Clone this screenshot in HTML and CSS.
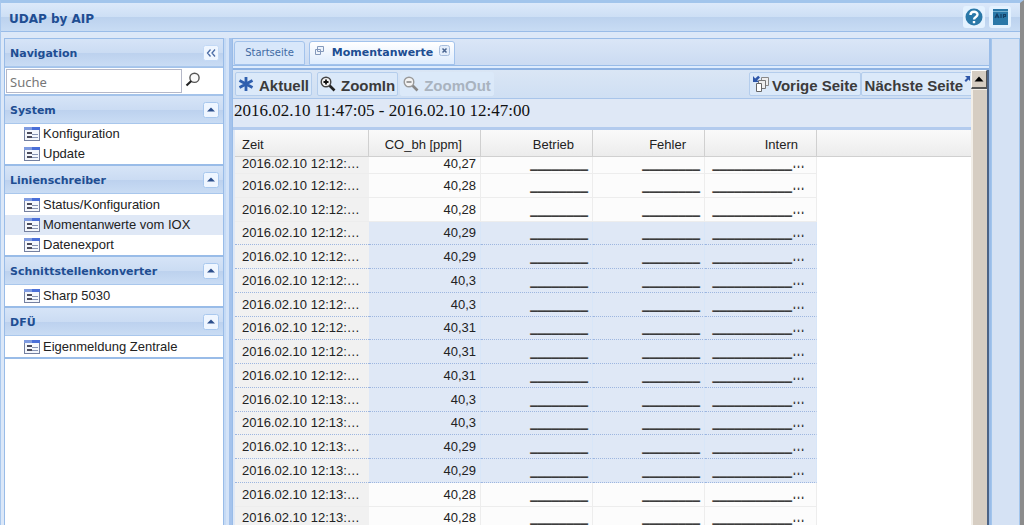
FILE: index.html
```html
<!DOCTYPE html>
<html lang="de">
<head>
<meta charset="utf-8">
<title>UDAP by AIP</title>
<link rel="stylesheet" href="styles.css">
</head>
<body>
<svg class="defs" aria-hidden="true">
  <symbol id="form" viewBox="0 0 16 14">
    <rect x="0.5" y="0.5" width="15" height="13" fill="#f4f7fc" stroke="#7480a0"/>
    <path d="M0 0h16v3H0z" fill="#7f9be0"/><path d="M8 0h8v3H8z" fill="#4a6fd8"/>
    <path d="M3 6h5M3 10h5" stroke="#4c4c5c" stroke-width="2"/>
    <path d="M8 7.500h6M8 10.500h6" stroke="#8794b4"/>
  </symbol>
  <symbol id="up" viewBox="0 0 16 16">
    <rect x="0.500" y="0.500" width="15" height="15" rx="2" fill="#eff6ff" stroke="#a9c8ee"/>
    <path d="M4 9.500L8 5.500l4 4z" fill="#2d4f8c"/>
  </symbol>
  <symbol id="pages" viewBox="0 0 18 18">
    <path d="M9.500 2.500h7v8h-7z" fill="#eee" stroke="#888"/>
    <path d="M6.500 5.500h7v8h-7z" fill="#eee" stroke="#777"/>
    <path d="M4.500 8.500h5v8h-5z" fill="#fff" stroke="#666"/>
  </symbol>
</svg>
<div class="app">
  <header class="titlebar">
    <h1>UDAP by AIP</h1>
    <button class="tool" aria-label="Hilfe"><svg width="22" height="22" viewBox="0 0 22 22"><circle cx="11" cy="11" r="8.500" fill="#2a78a8"/><path d="M7.500 9C7.500 4.800 14.500 4.800 14.500 8.500C14.500 11 11 10.800 11 13.500M11 15v2.300" fill="none" stroke="#fff" stroke-width="2.400"/></svg></button>
    <button class="tool" aria-label="AIP"><svg width="22" height="22" viewBox="0 0 22 22"><path d="M4 3h15v16H4z" fill="#2a78a8"/><path d="M4 5.500h15" stroke="#74b0d0"/><path d="M6 12l2-4 2 4M7 11h2M12 8v4M14.500 12V8.500h2v2h-2" stroke="#123f66" stroke-width="1.200" fill="none"/></svg></button>
  </header>
  <div class="columns">
    <nav class="nav">
      <div class="bar nav-title"><h2>Navigation</h2><button class="mini" aria-label="Einklappen"><svg width="16" height="16" viewBox="0 0 16 16"><rect x="0.500" y="0.500" width="15" height="15" rx="2" fill="#eff6ff" stroke="#c3d9f5"/><path d="M7.500 4.500L4.500 8l3 3.500M12 4.500L9 8l3 3.500" fill="none" stroke="#4a6ba5" stroke-width="1.300"/></svg></button></div>
      <form class="search"><input type="text" placeholder="Suche" aria-label="Suche"><button type="button" aria-label="Suchen"><svg width="16" height="16" viewBox="0 0 16 16"><circle cx="9.500" cy="5.800" r="4.600" fill="#fafafa" stroke="#555" stroke-width="1.400"/><path d="M6.300 9L1.500 13.500" stroke="#222" stroke-width="2.200"/></svg></button></form>
      <section><div class="bar"><h2>System</h2><button class="mini" aria-label="System einklappen"><svg width="16" height="16"><use href="#up"/></svg></button></div>
        <ul><li><a href="#"><svg width="16" height="14"><use href="#form"/></svg>Konfiguration</a></li><li><a href="#"><svg width="16" height="14"><use href="#form"/></svg>Update</a></li></ul></section>
      <section><div class="bar"><h2>Linienschreiber</h2><button class="mini" aria-label="Linienschreiber einklappen"><svg width="16" height="16"><use href="#up"/></svg></button></div>
        <ul><li><a href="#"><svg width="16" height="14"><use href="#form"/></svg>Status/Konfiguration</a></li><li><a class="current" href="#"><svg width="16" height="14"><use href="#form"/></svg>Momentanwerte vom IOX</a></li><li><a href="#"><svg width="16" height="14"><use href="#form"/></svg>Datenexport</a></li></ul></section>
      <section><div class="bar"><h2>Schnittstellenkonverter</h2><button class="mini" aria-label="Schnittstellenkonverter einklappen"><svg width="16" height="16"><use href="#up"/></svg></button></div>
        <ul><li><a href="#"><svg width="16" height="14"><use href="#form"/></svg>Sharp 5030</a></li></ul></section>
      <section><div class="bar"><h2>DFÜ</h2><button class="mini" aria-label="DFÜ einklappen"><svg width="16" height="16"><use href="#up"/></svg></button></div>
        <ul><li><a href="#"><svg width="16" height="14"><use href="#form"/></svg>Eigenmeldung Zentrale</a></li></ul></section>
    </nav>
    <div class="splitter"></div>
    <main class="main">
      <div class="tabs">
        <button class="tab">Startseite</button>
        <button class="tab active"><svg class="tab-icon" width="12" height="12" viewBox="0 0 12 12"><path d="M3.500 1.500h6v5h-6zM1.500 4.500h5v5h-5z" fill="#eef4fc" stroke="#8499bb"/></svg><span>Momentanwerte</span><svg class="tab-close" width="11" height="11" viewBox="0 0 11 11"><rect x="0.500" y="0.500" width="10" height="10" rx="2" fill="#e4eefb" stroke="#a6bddd"/><path d="M3.500 3.500l4 4M7.500 3.500l-4 4" stroke="#4a6590" stroke-width="1.500"/></svg></button>
      </div>
      <div class="tab-strip"></div>
      <div class="view">
        <div class="content">
          <div class="toolbar">
            <button class="btn"><svg width="16" height="16" viewBox="0 0 16 16"><path d="M8 1v14M1.500 4.500l13 7M1.500 11.500l13-7" stroke="#2f5fae" stroke-width="2.800"/></svg>Aktuell</button>
            <button class="btn"><svg width="16" height="16" viewBox="0 0 16 16"><path d="M9 9l5.500 5.500" stroke="#222" stroke-width="2.600"/><circle cx="6" cy="6" r="4.800" fill="#f3f3f3" stroke="#444" stroke-width="1.400"/><path d="M6 3.500v5M3.500 6h5" stroke="#111" stroke-width="1.800"/></svg>ZoomIn</button>
            <button class="btn off" disabled><svg width="16" height="16" viewBox="0 0 16 16"><path d="M9 9l5.500 5.500" stroke="#888" stroke-width="2.600"/><circle cx="6" cy="6" r="4.800" fill="#f3f3f3" stroke="#999" stroke-width="1.400"/><path d="M3.500 6h5" stroke="#888" stroke-width="1.600"/></svg>ZoomOut</button>
            <span class="fill"></span>
            <button class="btn page"><svg width="18" height="18" viewBox="0 0 18 18"><use href="#pages"/><path d="M1 1v6h6L5.200 5.200 8 2.500 6.200 0.800 3.200 3.500z" fill="#2e56a8"/></svg>Vorige Seite</button>
            <button class="btn page next">Nächste Seite<svg width="18" height="18" viewBox="0 0 18 18"><path d="M1 1h5v5L4.500 4.500 2 7 0.500 5.500 3 3z" fill="#2e56a8"/><path d="M7.500 6.500h8v8h-8z" fill="#eee" stroke="#777"/></svg></button>
          </div>
          <p class="range">2016.02.10 11:47:05 - 2016.02.10 12:47:00</p>
          <div class="grid">
            <table>
              <colgroup><col class="c-time"><col class="c-value"><col class="c-value"><col class="c-value"><col class="c-value"><col></colgroup>
              <thead><tr><th>Zeit</th><th>CO_bh [ppm]</th><th>Betrieb</th><th>Fehler</th><th>Intern</th><th class="rest"></th></tr></thead>
              <tbody>
<tr class="cut"><td>2016.02.10 12:12:…</td><td>40,27</td><td>________</td><td>________</td><td>___________…</td><td></td></tr>
<tr><td>2016.02.10 12:12:…</td><td>40,28</td><td>________</td><td>________</td><td>___________…</td><td></td></tr>
<tr><td>2016.02.10 12:12:…</td><td>40,28</td><td>________</td><td>________</td><td>___________…</td><td></td></tr>
<tr class="sel"><td>2016.02.10 12:12:…</td><td>40,29</td><td>________</td><td>________</td><td>___________…</td><td></td></tr>
<tr class="sel"><td>2016.02.10 12:12:…</td><td>40,29</td><td>________</td><td>________</td><td>___________…</td><td></td></tr>
<tr class="sel"><td>2016.02.10 12:12:…</td><td>40,3</td><td>________</td><td>________</td><td>___________…</td><td></td></tr>
<tr class="sel"><td>2016.02.10 12:12:…</td><td>40,3</td><td>________</td><td>________</td><td>___________…</td><td></td></tr>
<tr class="sel"><td>2016.02.10 12:12:…</td><td>40,31</td><td>________</td><td>________</td><td>___________…</td><td></td></tr>
<tr class="sel"><td>2016.02.10 12:12:…</td><td>40,31</td><td>________</td><td>________</td><td>___________…</td><td></td></tr>
<tr class="sel"><td>2016.02.10 12:12:…</td><td>40,31</td><td>________</td><td>________</td><td>___________…</td><td></td></tr>
<tr class="sel"><td>2016.02.10 12:13:…</td><td>40,3</td><td>________</td><td>________</td><td>___________…</td><td></td></tr>
<tr class="sel"><td>2016.02.10 12:13:…</td><td>40,3</td><td>________</td><td>________</td><td>___________…</td><td></td></tr>
<tr class="sel"><td>2016.02.10 12:13:…</td><td>40,29</td><td>________</td><td>________</td><td>___________…</td><td></td></tr>
<tr class="sel"><td>2016.02.10 12:13:…</td><td>40,29</td><td>________</td><td>________</td><td>___________…</td><td></td></tr>
<tr><td>2016.02.10 12:13:…</td><td>40,28</td><td>________</td><td>________</td><td>___________…</td><td></td></tr>
<tr><td>2016.02.10 12:13:…</td><td>40,28</td><td>________</td><td>________</td><td>___________…</td><td></td></tr>
              </tbody>
            </table>
          </div>
        </div>
        <div class="scroll"><button aria-label="Nach oben"><svg width="10" height="6" viewBox="0 0 10 6"><path d="M0.500 5.500L5 0.500l4.500 5z" fill="#000"/></svg></button><div class="thumb"></div></div>
      </div>
    </main>
    <aside class="east"></aside>
  </div>
</div>
</body>
</html>
```
FILE: styles.css
```css
* { box-sizing: border-box; }
body { margin: 0; font: 13px/20px "Liberation Sans", Arial, sans-serif; color: #222; }
h1, h2, p, ul { margin: 0; padding: 0; }
button, input { font: inherit; color: inherit; margin: 0; padding: 0; border: 0; background: none; }
button svg { display: block; flex: none; }
.defs { position: absolute; width: 0; height: 0; }

.app { display: flex; flex-direction: column; height: 100vh; overflow: hidden; padding-left: 3px; background: #dce8f8; border-top: 3px solid #a2c5ec; border-left: 1px solid #a9c8ee; border-right: 4px solid #8c8c8c; }
.titlebar { display: flex; align-items: center; gap: 4px; flex: none; height: 29px; margin-left: -3px; padding: 0 9px 0 8px; background: linear-gradient(#dce9fa, #cddff5 50%, #bcd2ee 51%, #c8dcf4); border-bottom: 1px solid #99bce8; }
.titlebar h1 { flex: 1; padding-top: 3px; font: bold 12px/16px "DejaVu Sans", sans-serif; color: #204d92; }
.tool { width: 22px; height: 22px; border-radius: 3px; background: #e4f2ff; }

.columns { display: flex; flex: 1; min-height: 0; margin-top: 6px; }
.nav { flex: none; width: 220px; background: #fff; border: solid #99bce8; border-width: 1px 1px 0; }
.bar { display: flex; align-items: center; justify-content: space-between; height: 28px; padding: 0 4px 0 5px; background: linear-gradient(#d6e4f7, #cbdcf3 50%, #bcd1ee 51%, #c9dcf4); border-bottom: 1px solid #a9c7ec; }
.bar h2 { padding-top: 2px; font: bold 11px/16px "DejaVu Sans", sans-serif; color: #204d92; }
.mini { width: 16px; height: 16px; }
.search { display: flex; height: 29px; border: solid #a4c3ea; border-width: 1px 0 2px; }
.search input { flex: 1; min-width: 0; margin: 1px 0 1px 1px; padding: 1px 3px 0; border: 1px solid #b5b8c8; background: #fff; font: 13px/20px "Noto Sans", sans-serif; }
.search input::placeholder { color: #777; opacity: 1; }
.search button { display: flex; align-items: flex-start; width: 41px; padding: 4px 0 0 3px; }
section { border-bottom: 2px solid #99bce8; }
section + section ul { padding-top: 1px; }
ul { list-style: none; }
li a { display: flex; align-items: center; gap: 3px; height: 20px; padding-left: 19px; color: #222; text-decoration: none; white-space: nowrap; }
li a.current { background: #dfe8f6; }
li svg { flex: none; }

.splitter { flex: none; width: 8px; background: #d3e3f8; border-left: 2px solid #c5daf5; border-right: 3px solid #a5c3ec; }
.main { display: flex; flex-direction: column; flex: 1; min-width: 0; border: solid #99bce8; border-width: 1px 2px 0 1px; }
.tabs { display: flex; align-items: flex-end; gap: 4px; flex: none; height: 27px; padding-left: 1px; background: linear-gradient(#dae6f7, #cbdbf2); border-bottom: 1px solid #99bce8; }
.tab { display: flex; justify-content: center; width: 71px; height: 24px; padding-top: 1px; border: 1px solid #a3c3ec; border-radius: 3px 3px 0 0; background: #d8e7fa; font: 10px/20px "DejaVu Sans", sans-serif; color: #416aa3; }
.tab.active { gap: 6px; width: 146px; background: linear-gradient(#fff, #deecfd); font-weight: bold; font-size: 11px; color: #204d92; }
.tab-icon, .tab-close { margin-top: 2px; }
.tab-strip { flex: none; height: 4px; background: #deecfd; border-bottom: 2px solid #8db2e3; }
.view { display: flex; flex: 1; min-height: 0; }
.content { display: flex; flex-direction: column; flex: 1; min-width: 0; background: #dfe8f6; }
.toolbar { display: flex; flex: none; align-items: center; height: 29px; padding-left: 2px; overflow: hidden; background: linear-gradient(#dae6f5, #cfdff3); border-bottom: 1px solid #a9c5ea; }
.btn { display: flex; flex: none; align-items: center; gap: 5px; height: 24px; margin-right: 5px; padding: 3px 2px 0; border: 1px solid #b4cdec; border-radius: 2px; background: #dbe9f9; font-weight: bold; font-size: 15px; line-height: 20px; color: #3b3b3b; white-space: nowrap; }
.btn svg { margin-top: -3px; }
.btn.off { margin-left: -3px; border-color: #dbe9f9; color: #a9b3bf; }
.btn.page { gap: 2px; margin: 0; }
.btn.page.next { gap: 1px; margin-right: -14px; padding-left: 3px; }
.fill { flex: 1; }
.range { flex: none; height: 31px; padding-left: 1px; font: 17px/24px "Liberation Serif", "Times New Roman", serif; color: #111; border-bottom: 3px solid #b3cbee; white-space: nowrap; }
.grid { flex: 1; min-height: 0; margin-left: 2px; overflow: hidden; background: #fff; }

table { width: 100%; table-layout: fixed; border-collapse: separate; border-spacing: 0; }
.c-time { width: 134px; }
.c-value { width: 112px; }
th { height: 27px; padding: 3px 18px 0 7px; background: linear-gradient(#fafafa, #ececec); border-right: 1px solid #d0d0d0; border-bottom: 1px solid #d0d0d0; font-weight: normal; line-height: 20px; text-align: right; white-space: nowrap; color: #222; }
th:first-child { text-align: left; }
th.rest { border-right: 0; }
td { height: 24px; padding: 0 4px 4px 7px; border-bottom: 1px solid #ededed; line-height: 14px; text-align: right; vertical-align: bottom; white-space: nowrap; }
tr:nth-child(4n) td { height: 23px; }
tr.cut td { height: 17px; padding-bottom: 3px; line-height: 13px; }
td:first-child { background: #f1f1f1; text-align: left; }
td:nth-child(n+2):nth-child(-n+5) { border-right: 1px solid #ededed; background: #fcfcfc; }
td:nth-child(n+3) { text-shadow: 0 -1px #666; }
td:nth-child(5) { padding-right: 11px; }
td:last-child, .sel td:last-child { border: 0; background: #fff; }
.sel td { border-bottom: 1px dotted #9db6e0; }
.sel td:nth-child(n+2):nth-child(-n+5) { background: #dfe8f6; border-right-color: #d8e6f8; }

.scroll { display: flex; flex-direction: column; flex: none; width: 18px; background: #d6cdc2; border-right: 2px solid #4c6385; }
.scroll button { display: flex; align-items: center; justify-content: center; height: 19px; border: 1px solid #fff; border-right-color: #555; border-bottom: 2px solid #555; background: #d6cdc2; }
.thumb { flex: 1; border: solid #f2eee8; border-width: 1px 0 0 2px; }
.east { flex: none; width: 29px; background: #d5e2f4; border: solid #a2c5ec; border-width: 1px 1px 0; }
```
